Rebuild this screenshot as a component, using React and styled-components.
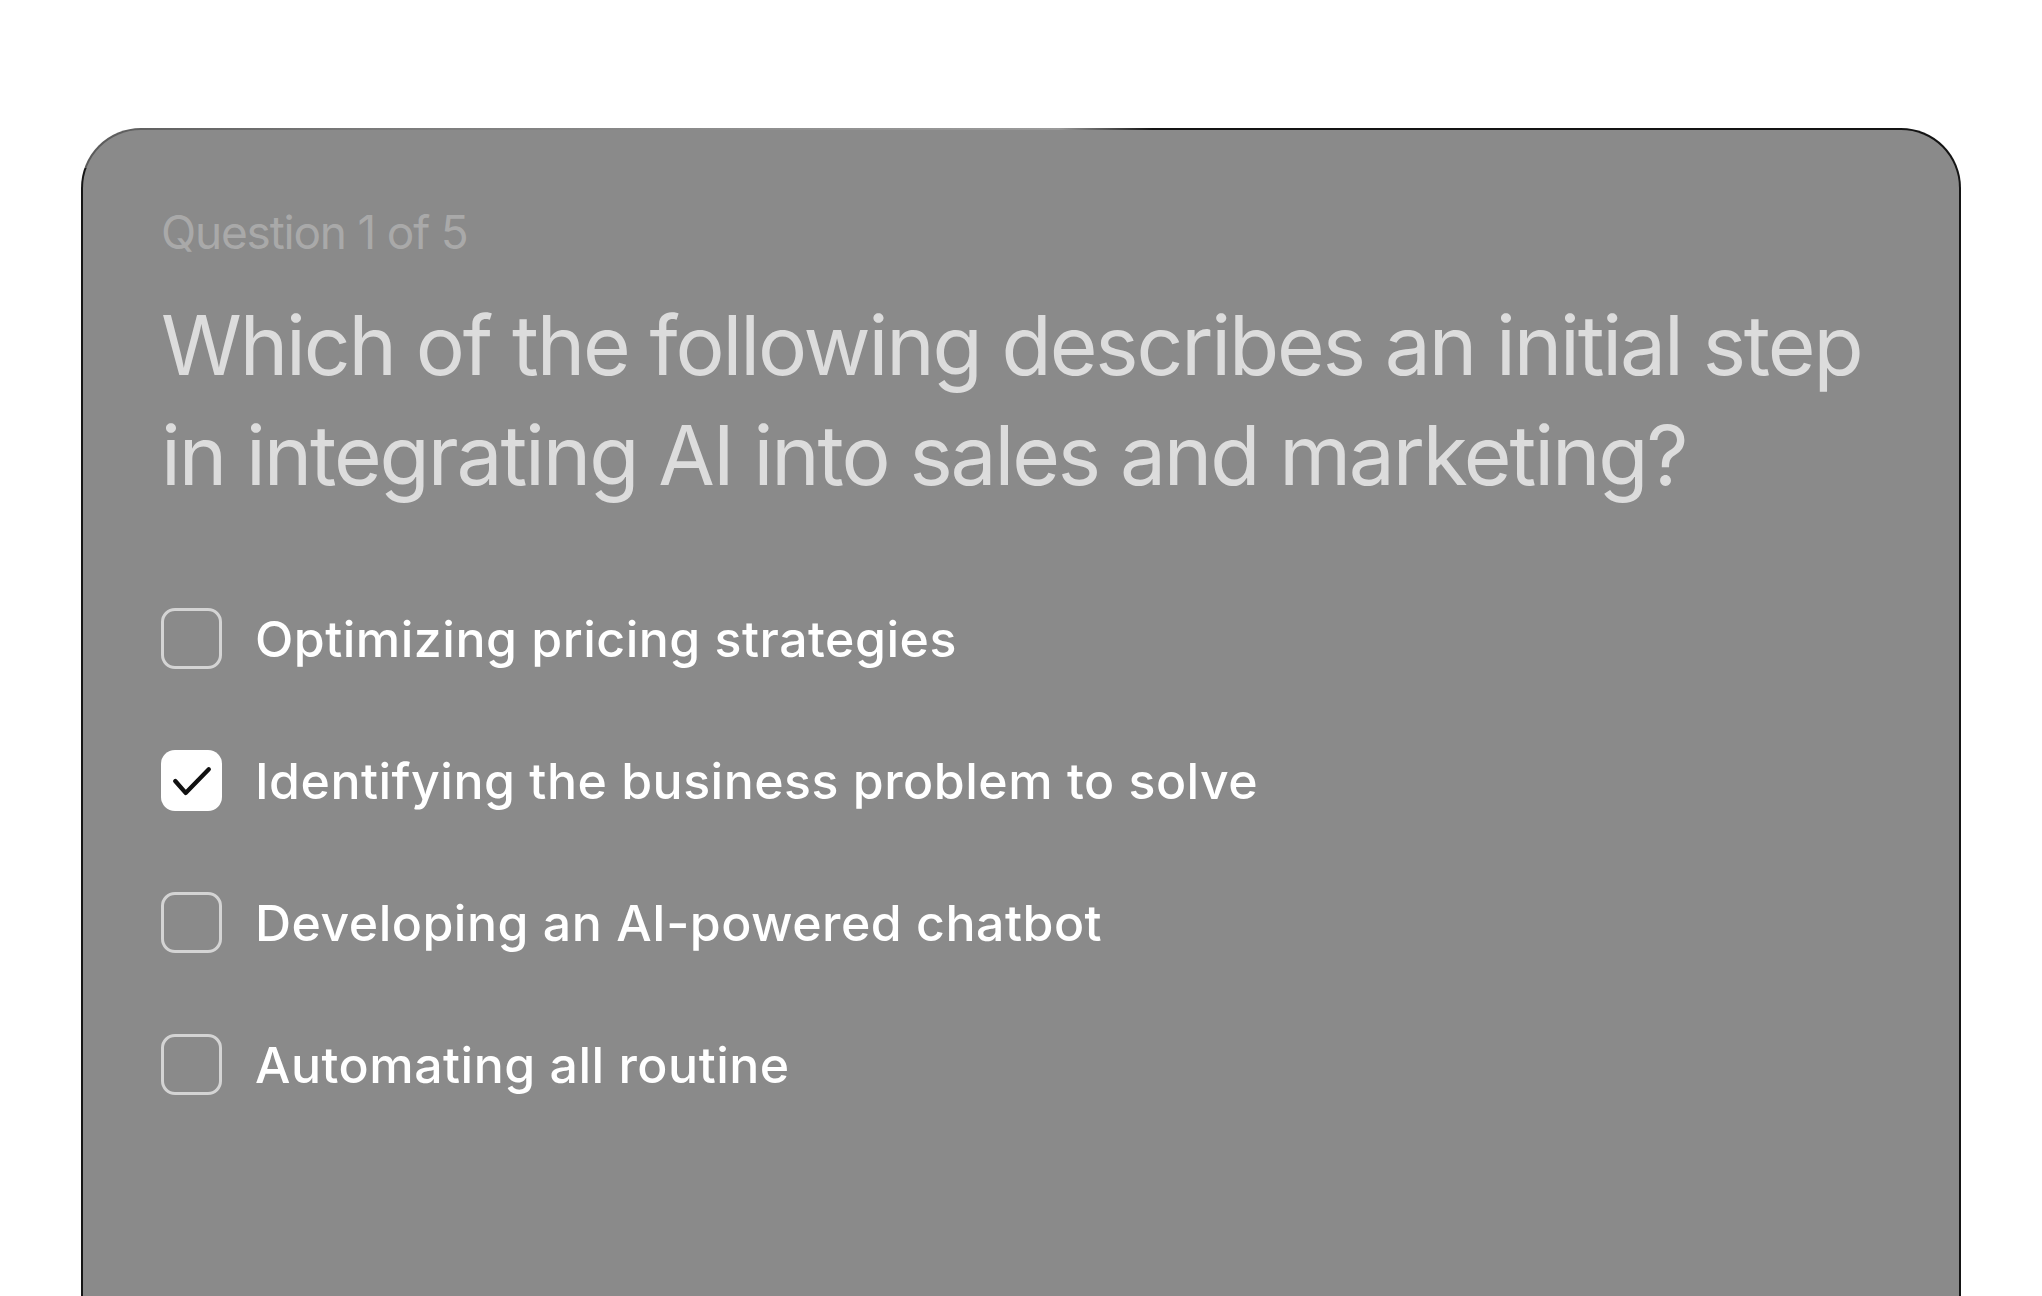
import React, { useState } from 'react';
import styled, { createGlobalStyle } from 'styled-components';

const GlobalStyle = createGlobalStyle`
    html, body {
        margin: 0;
        padding: 0;
        background: #ffffff;
        overflow: hidden;
    }
    body {
        font-family: Inter, "Noto Sans", sans-serif;
    }
`;

const Page = styled.div`
    padding: 128px 0 0 81px;
    width: 2042px;
    height: 1296px;
    box-sizing: border-box;
`;

const Card = styled.div`
    width: 1880px;
    height: 1300px;
    box-sizing: border-box;
    border: 2px solid transparent;
    border-radius: 60px;
    background:
        linear-gradient(#8a8a8a, #8a8a8a) padding-box,
        linear-gradient(90deg, #5a5a5a 0%, #7a7a7a 15%, #8e8e8e 35%, #9a9a9a 52%, #141414 57%, #141414 100%) top / 100% 40px no-repeat border-box,
        #151515 border-box;
    padding: 75px 78px 0;
`;

const Counter = styled.div`
    font-size: 46px;
    line-height: 55px;
    letter-spacing: -0.026em;
    color: #a9a9a9;
    font-weight: 400;
`;

const Question = styled.h1`
    margin: 31px 0 0;
    font-size: 82px;
    line-height: 110px;
    font-weight: 400;
    letter-spacing: -0.026em;
    color: #dcdcdc;
`;

const Options = styled.div`
    margin-top: 97px;
    display: flex;
    flex-direction: column;
    gap: 81px;
`;

const Option = styled.label`
    display: flex;
    align-items: center;
    gap: 33px;
    height: 61px;
    cursor: pointer;
`;

const Box = styled.span`
    width: 61px;
    height: 61px;
    flex: none;
    box-sizing: border-box;
    border-radius: 14px;
    border: ${(p) => (p.$checked ? 'none' : '3px solid #d4d4d4')};
    background: ${(p) => (p.$checked ? '#ffffff' : 'transparent')};
    display: flex;
    align-items: center;
    justify-content: center;
    svg {
        width: 61px;
        height: 61px;
    }
`;

const OptionText = styled.span`
    font-size: 50px;
    line-height: 60px;
    font-weight: 500;
    letter-spacing: 0.01em;
    color: #ffffff;
`;

const options = [
    'Optimizing pricing strategies',
    'Identifying the business problem to solve',
    'Developing an AI-powered chatbot',
    'Automating all routine',
];

const Check = () => (
    <svg viewBox="0 0 24 24" fill="none">
        <path d="M5.6 12.2 9.7 16.9 18.8 7.6" stroke="#111" strokeWidth="1.7" strokeLinecap="round" strokeLinejoin="round" />
    </svg>
);

const App = () => {
    const [selected, setSelected] = useState(1);

    return (
        <Page>
            <GlobalStyle />
            <Card>
                <Counter>Question 1 of 5</Counter>
                <Question>Which of the following describes an initial step in integrating AI into sales and marketing?</Question>
                <Options>
                    {options.map((text, i) => (
                        <Option key={text} onClick={() => setSelected(i)}>
                            <Box $checked={selected === i}>{selected === i && <Check />}</Box>
                            <OptionText>{text}</OptionText>
                        </Option>
                    ))}
                </Options>
            </Card>
        </Page>
    );
};

export default App;
